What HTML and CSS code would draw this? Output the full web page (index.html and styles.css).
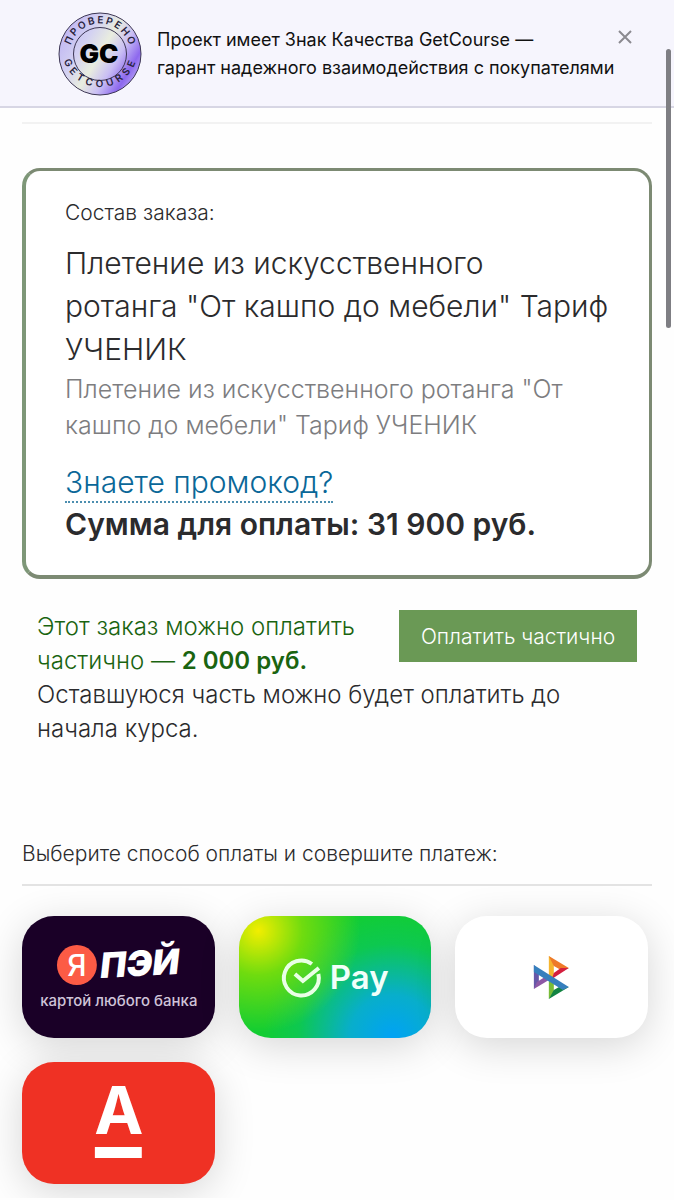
FILE: index.html
```html
<!DOCTYPE html>
<html lang="ru">
<head>
  <meta charset="UTF-8">
  <meta name="viewport" content="width=device-width, initial-scale=1.0">
  <title>Оплата заказа</title>
  <link rel="stylesheet" href="styles.css">
</head>
<body>
  <header class="banner">
    <svg class="badge" viewBox="0 0 84 84" role="img" aria-label="Проверено GetCourse">
      <defs>
        <linearGradient id="badgeFill" x1="0" y1="0.2" x2="1" y2="0.8">
          <stop offset="0" stop-color="#bdb2f3"/>
          <stop offset="0.3" stop-color="#d3d1f2"/>
          <stop offset="0.5" stop-color="#e9eddf"/>
          <stop offset="0.68" stop-color="#c9bef4"/>
          <stop offset="0.85" stop-color="#8d68ee"/>
          <stop offset="1" stop-color="#c4b8f5"/>
        </linearGradient>
        <path id="arcTop" d="M11.500 42a30.500 30.500 0 0 1 61 0"/>
        <path id="arcBottom" d="M4 36a38 38 0 1 0 76 0" transform="translate(0 1)"/>
      </defs>
      <circle cx="42" cy="42" r="41" fill="url(#badgeFill)" stroke="#3c3654"/>
      <circle cx="42" cy="42" r="26.500" fill="none" stroke="#3c3654"/>
      <text class="badge-ring"><textPath href="#arcTop" startOffset="51%">ПРОВЕРЕНО</textPath></text>
      <text class="badge-ring badge-ring-low"><textPath href="#arcBottom" startOffset="51%">GETCOURSE</textPath></text>
      <text class="badge-name" x="41" y="51">GC</text>
    </svg>
    <p class="banner-text">Проект имеет Знак Качества GetCourse —<br>гарант надежного взаимодействия с покупателями</p>
    <button class="close" type="button" aria-label="Закрыть">
      <svg viewBox="0 0 14 14"><path d="M1 1l12 12M13 1L1 13"/></svg>
    </button>
  </header>
  <div class="scroll-thumb"></div>

  <main class="page">
    <hr>
    <section class="order">
      <p class="order-label">Состав заказа:</p>
      <h1>Плетение из искусственного<br>ротанга "От кашпо до мебели" Тариф УЧЕНИК</h1>
      <p class="order-desc">Плетение из искусственного ротанга "От кашпо до мебели" Тариф УЧЕНИК</p>
      <a class="promo" href="#">Знаете промокод?</a>
      <p class="total">Сумма для оплаты: 31 900 руб.</p>
    </section>

    <section class="partial">
      <button class="partial-btn" type="button">Оплатить частично</button>
      <p class="partial-sum">Этот заказ можно оплатить частично — <b>2 000 руб.</b></p>
      <p>Оставшуюся часть можно будет оплатить до начала курса.</p>
    </section>

    <h2>Выберите способ оплаты и совершите платеж:</h2>
    <div class="methods">
      <button class="method yandex" type="button">
        <svg viewBox="0 0 193 122">
          <circle cx="55" cy="49" r="20" fill="#fc5b45"/>
          <text class="ya" x="55" y="60">Я</text>
          <text class="pay-ru" x="79" y="62" transform="rotate(-3 79 62)">ПЭЙ</text>
          <text class="ya-note" x="97" y="90">картой любого банка</text>
        </svg>
      </button>
      <button class="method sber" type="button">
        <svg viewBox="0 0 193 122">
          <g fill="none" stroke="#e9ffe6" stroke-width="4">
            <path d="M73 48A17.500 17.500 0 1 0 79.500 58"/>
            <path d="M56 58l8 7 16-13"/>
          </g>
          <text class="pay-en" x="91" y="73">Pay</text>
        </svg>
      </button>
      <button class="method podeli" type="button" aria-label="Оплата частями">
        <svg viewBox="0 0 193 122">
          <path d="M94 40l5 4v18l-5 2z" fill="#f5b52e"/>
          <path d="M94 40l20 12-6 3-9-5z" fill="#ee7a29"/>
          <path d="M114 52L97 63l2-6 7-5z" fill="#d41f3f"/>
          <path d="M94 63l5 3v10l-5 7z" fill="#79bd37"/>
          <path d="M114 71L94 83l5-9 7-4z" fill="#128342"/>
          <path d="M79 49l5 5v13l-5 6z" fill="#6657a8"/>
          <path d="M79 73l15-9-4-3-8 5z" fill="#8c58a5"/>
          <path d="M79 49l35 22-6 3-29-18z" fill="#367fbd"/>
        </svg>
      </button>
      <button class="method alfa" type="button" aria-label="Альфа-Банк">
        <svg viewBox="0 0 193 122">
          <text class="alfa-a" x="97" y="72">А</text>
          <path d="M73 85h47v11H73z" fill="#fff"/>
        </svg>
      </button>
    </div>
  </main>
</body>
</html>
```
FILE: styles.css
```css
* {
  box-sizing: border-box;
}
body {
  margin: 0;
  font-family: Inter, "Open Sans", sans-serif;
  font-weight: 300;
  color: #2b2b2d;
  background-color: #fefefe;
}
p, h1, h2 {
  margin: 0;
  font-weight: 300;
}
button {
  border: none;
  padding: 0;
  font-family: inherit;
  cursor: pointer;
}
hr {
  margin: 0;
  border: none;
  border-top: 2px solid #f2f2f2;
}

/* top banner */
.banner {
  display: flex;
  align-items: flex-start;
  height: 108px;
  padding: 12px 40px 0 58px;
  background-color: #f6f5fd;
  border-bottom: 2px solid #d7d6e4;
}
.badge {
  width: 84px;
  height: 84px;
  flex: none;
}
.badge-ring {
  font-size: 10px;
  font-weight: 600;
  letter-spacing: 2px;
  text-anchor: middle;
  fill: #29243d;
}
.badge-ring-low {
  letter-spacing: 4px;
}
.badge-name {
  font-size: 26px;
  font-weight: 900;
  text-anchor: middle;
  fill: #000;
}
.banner-text {
  flex: 1;
  padding: 14px 0 0 15px;
  font-size: 18px;
  font-weight: 400;
  line-height: 28px;
  color: #111;
  white-space: nowrap;
}
.close {
  width: 18px;
  height: 18px;
  margin-top: 16px;
  background: none;
}
.close svg {
  display: block;
  width: 14px;
  margin: 0 auto;
  fill: none;
  stroke: #8b8a90;
  stroke-width: 2;
}
.scroll-thumb {
  position: absolute;
  top: 49px;
  right: 3px;
  width: 5px;
  height: 279px;
  border-radius: 3px;
  background-color: #7e7e83;
}

.page {
  padding: 14px 22px 14px;
}

/* order card */
.order {
  margin-top: 44px;
  padding: 24px 36px 29px 39px;
  border: 3px solid #7c8a73;
  border-left: 4px solid #7e9778;
  border-bottom-width: 4px;
  border-radius: 18px;
  background-color: #fff;
}
.order-label {
  font-size: 21px;
  line-height: 36px;
}
.order h1 {
  margin-top: 11px;
  font-size: 30px;
  line-height: 43px;
}
.order-desc {
  font-size: 25px;
  line-height: 36px;
  color: #7d7d7f;
}
.promo {
  display: inline-block;
  margin-top: 20px;
  font-size: 30px;
  line-height: 38px;
  color: #0a6798;
  text-decoration: none;
  border-bottom: 2px dotted #4c8eaf;
}
.total {
  font-size: 30px;
  line-height: 43px;
  font-weight: 600;
}

/* partial payment */
.partial {
  margin-top: 31px;
  padding: 0 15px;
  font-size: 24px;
  line-height: 34px;
}
.partial-btn {
  float: right;
  width: 238px;
  height: 52px;
  margin-left: 20px;
  background-color: #6a9955;
  color: #fff;
  font-size: 21px;
  font-weight: 300;
}
.partial-sum {
  color: #1a6410;
}
.partial-sum b {
  font-weight: 600;
}

h2 {
  margin-top: 91px;
  padding-bottom: 13px;
  border-bottom: 2px solid #e3e3e3;
  font-size: 21px;
  line-height: 34px;
}

/* payment methods */
.methods {
  display: grid;
  grid-template-columns: repeat(3, 1fr);
  gap: 24px;
  margin-top: 30px;
  padding-right: 4px;
}
.method {
  height: 122px;
  border-radius: 32px;
  overflow: hidden;
  box-shadow: 0 8px 40px rgba(0, 0, 0, 0.16);
}
.method svg {
  display: block;
  width: 100%;
  height: 100%;
}
.yandex {
  background-color: #1a0027;
}
.ya {
  font-size: 30px;
  font-weight: 500;
  text-anchor: middle;
  fill: #fff;
}
.pay-ru {
  font-size: 35px;
  font-weight: 900;
  font-style: italic;
  fill: #fff;
}
.ya-note {
  font-size: 15px;
  font-weight: 500;
  text-anchor: middle;
  fill: #cfc3d8;
}
.sber {
  background:
    radial-gradient(circle at 10% 12%, #f2ee00 0, rgba(150, 226, 0, 0.7) 22%, rgba(20, 205, 40, 0) 50%),
    radial-gradient(circle at 80% 100%, #00a2f5 0, #08aecb 22%, rgba(8, 195, 110, 0.5) 48%, rgba(15, 205, 50, 0) 66%),
    #12cd32;
}
.pay-en {
  font-size: 33px;
  font-weight: 600;
  fill: #f1fffa;
}
.podeli {
  background-color: #fff;
}
.alfa {
  background-color: #ef3124;
}
.alfa-a {
  font-size: 66px;
  font-weight: 700;
  text-anchor: middle;
  fill: #fff;
}
```
